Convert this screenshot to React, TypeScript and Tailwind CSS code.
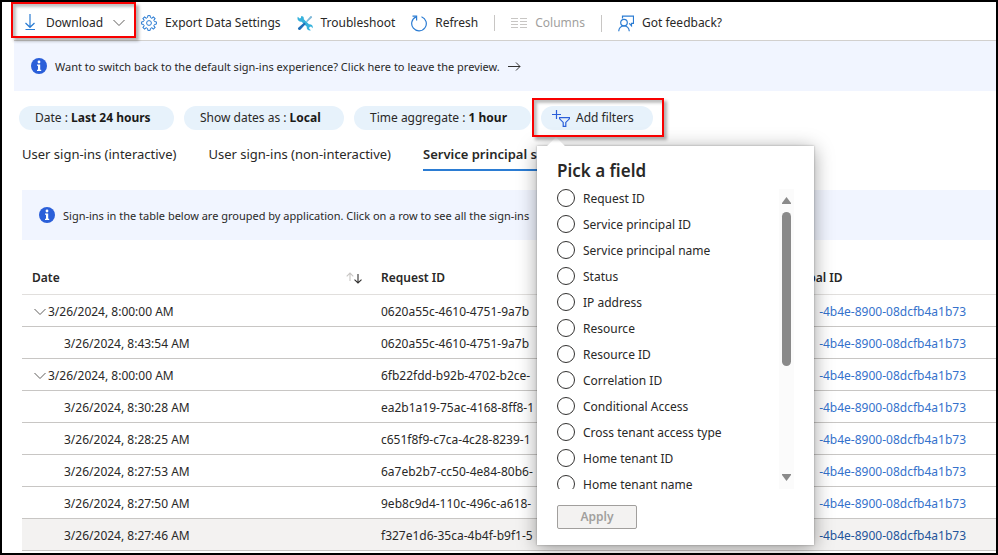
import React from "react";

const fields = [
  "Request ID",
  "Service principal ID",
  "Service principal name",
  "Status",
  "IP address",
  "Resource",
  "Resource ID",
  "Correlation ID",
  "Conditional Access",
  "Cross tenant access type",
  "Home tenant ID",
  "Home tenant name",
];

type Row = { date: string; request: string; parent?: boolean; active?: boolean };

const rows: Row[] = [
  { date: "3/26/2024, 8:00:00 AM", request: "0620a55c-4610-4751-9a7b", parent: true },
  { date: "3/26/2024, 8:43:54 AM", request: "0620a55c-4610-4751-9a7b" },
  { date: "3/26/2024, 8:00:00 AM", request: "6fb22fdd-b92b-4702-b2ce-", parent: true },
  { date: "3/26/2024, 8:30:28 AM", request: "ea2b1a19-75ac-4168-8ff8-1" },
  { date: "3/26/2024, 8:28:25 AM", request: "c651f8f9-c7ca-4c28-8239-1" },
  { date: "3/26/2024, 8:27:53 AM", request: "6a7eb2b7-cc50-4e84-80b6-" },
  { date: "3/26/2024, 8:27:50 AM", request: "9eb8c9d4-110c-496c-a618-" },
  { date: "3/26/2024, 8:27:46 AM", request: "f327e1d6-35ca-4b4f-b9f1-5", active: true },
];

function DownloadIcon() {
  return (
    <svg width="14" height="18" viewBox="0 0 14 18" fill="none" stroke="#2b7cd3" strokeWidth="1.2">
      <path d="M8 0v13M3.500 9 8 13.300 12.500 9M3.500 15.500h9.500" />
    </svg>
  );
}

function Chevron() {
  return (
    <svg width="12" height="8" viewBox="0 0 12 8" fill="none" stroke="#605e5c" strokeWidth="1">
      <path d="M.5 1 6 6.5 11.500 1" />
    </svg>
  );
}

function GearIcon() {
  const teeth = [0, 45, 90, 135, 180, 225, 270, 315];
  return (
    <svg width="16" height="16" viewBox="-8 -8 16 16" fill="none" stroke="#2b7cd3" strokeWidth="1">
      {teeth.map((a) => (
        <path
          key={a}
          transform={`rotate(${a})`}
          d="M-2.100 -5.100 L-1.400 -5.500 L-1.200 -7.400 H1.200 L1.400 -5.500 L2.100 -5.100"
        />
      ))}
      <circle r="2.400" />
    </svg>
  );
}

function ToolsIcon() {
  return (
    <svg width="16" height="16" viewBox="0 0 16 16" fill="none">
      <path d="M14.800 1.200 13.600.9 9 6.200l1 1 5.100-4.700z" fill="#7fb8d8" />
      <path
        d="M4.300.9 3.800 3 2.700 3.400.8 1.800C.2 3.200.5 4.800 1.600 5.800c.8.8 1.900 1.100 3 .9l5.200 5.100c-.2 1.200.1 2.200.9 2.900.9.8 2 1 3.100.6l-1.700-1.700.4-1.600 1.600-.4 1.500 1.600c.4-1.100.1-2.300-.7-3.100-.8-.8-1.900-1.100-2.900-.9L6.800 4.300c.2-1-.1-2-.8-2.700A3.400 3.400 0 0 0 4.300.9z"
        fill="#36b2dc"
      />
      <path d="M7.200 7.500 8.800 9 3.600 14.400c-.6.7-1.600.8-2.200.2s-.6-1.600.1-2.200z" fill="#1f6fb8" />
    </svg>
  );
}

function RefreshIcon() {
  return (
    <svg width="16" height="17" viewBox="0 0 16 17" fill="none" stroke="#2b7cd3" strokeWidth="1.200">
      <path d="M10.500 1.700A7.300 7.300 0 1 1 5 1.900" />
      <path d="M1.500 1.200H5.600V5.400" />
    </svg>
  );
}

function ColumnsIcon() {
  return (
    <svg width="16" height="12" viewBox="0 0 16 12" stroke="#c8c6c4" strokeWidth="1">
      <path d="M0 1.500h7M9 1.500h7M0 4.500h7M9 4.500h7M0 7.500h7M9 7.500h7M0 10.500h7M9 10.500h7" />
    </svg>
  );
}

function FeedbackIcon() {
  return (
    <svg width="16" height="17" viewBox="0 0 16 17" fill="none" stroke="#2b7cd3" strokeWidth="1.200">
      <path d="M4.500 3.500V1.100h11v7.300h-2v2.400l-2.300-2.400" />
      <circle cx="6" cy="7.600" r="3.300" />
      <path d="M.7 16.200c.3-3 2.500-5.200 5.300-5.200s5 2.200 5.300 5.200" />
    </svg>
  );
}

function InfoIcon() {
  return (
    <svg className="shrink-0" width="16" height="16" viewBox="0 0 16 16">
      <circle cx="8" cy="8" r="8" fill="#2b5fd9" />
      <circle cx="8" cy="4" r="1.400" fill="#fff" />
      <path d="M6 6.500h3.200v5.300h1v1.200H6v-1.200h1V7.700H6z" fill="#fff" />
    </svg>
  );
}

function AddFilterIcon() {
  return (
    <svg width="18" height="17" viewBox="0 0 18 17" fill="none" stroke="#2b5fd9" strokeWidth="1.200">
      <path d="M4.500 0v9M0 4.500h9" />
      <path d="M7.600 7.600h9.800v1.200l-3.600 3.600v3.900h-2.600v-3.900L7.600 8.800z" />
    </svg>
  );
}

function ArrowRight() {
  return (
    <svg width="13" height="9" viewBox="0 0 13 9" fill="none" stroke="#323130" strokeWidth="1">
      <path d="M0 4.500h12M8 .5l4 4-4 4" />
    </svg>
  );
}

function SortIcon() {
  return (
    <svg width="17" height="12" viewBox="0 0 17 12" fill="none" strokeWidth="1.100">
      <path d="M4 9V1M.7 4.300 4 1l3.300 3.300" stroke="#c8c6c4" />
      <path d="M12 2v9M8.500 7.600 12 11l3.500-3.400" stroke="#323130" />
    </svg>
  );
}

function Highlight({ className }: { className: string }) {
  return (
    <span
      className={`pointer-events-none absolute z-30 border-2 border-[#f80000] shadow-[3px_3px_3px_rgba(0,0,0,0.3),inset_3px_3px_3px_rgba(0,0,0,0.25)] ${className}`}
    />
  );
}

function Pill({ label, value, className }: { label: string; value: string; className: string }) {
  return (
    <button className={`h-6 rounded-full bg-[#e7f2fb] px-4 text-left whitespace-nowrap ${className}`}>
      {label} : <b className="font-bold text-[#1b1a19]">{value}</b>
    </button>
  );
}

function FieldPicker() {
  return (
    <div
      role="dialog"
      aria-label="Pick a field"
      className="absolute top-10 -left-1 z-20 w-[277px] bg-white px-5 pt-[13px] pb-4 shadow-[0_3px_18px_rgba(0,0,0,0.38),0_0_2px_rgba(0,0,0,0.3)]"
    >
      <div className="absolute -top-1.5 left-3 size-3.5 rotate-45 bg-white" />
      <h2 className="relative mb-1.5 text-[17px] leading-6 font-semibold">Pick a field</h2>
      <div className="flex h-[300px] justify-between overflow-hidden">
        <div className="flex flex-col gap-2">
          {fields.map((f) => (
            <label key={f} className="flex h-[18px] shrink-0 items-center gap-2">
              <input
                type="radio"
                name="field"
                className="size-[18px] appearance-none rounded-full border border-[#323130] bg-white"
              />
              <span className="pt-px">{f}</span>
            </label>
          ))}
        </div>
        <div className="flex w-[15px] flex-col items-center bg-[#fbfbfb] pt-2 pb-2">
          <svg width="9" height="7" viewBox="0 0 9 7" fill="#8a8a8a">
            <path d="M4.500 0 9 6v1H0V6z" />
          </svg>
          <div className="mt-2 h-[154px] w-[9px] rounded-full bg-[#8a8a8a]" />
          <svg className="mt-auto" width="9" height="7" viewBox="0 0 9 7" fill="#8a8a8a">
            <path d="M4.500 7 0 1V0h9v1z" />
          </svg>
        </div>
      </div>
      <button
        disabled
        className="mt-4 block h-6 w-20 rounded-[2px] border border-[#a19f9d] bg-[#f3f2f1] font-semibold text-[#a19f9d]"
      >
        Apply
      </button>
    </div>
  );
}

export default function App() {
  return (
    <main className="min-h-screen overflow-hidden border-2 border-black bg-white font-['Noto_Sans','Open_Sans',sans-serif] text-[12px] leading-4 text-[#292827]">
      <div className="ml-3 flex h-[39px] items-center border-b border-[#d2d0ce] pl-2 whitespace-nowrap">
        <button className="relative flex items-center gap-2.5 pt-1">
          <DownloadIcon />
          <span>Download</span>
          <Chevron />
          <Highlight className="-inset-x-[11px] -top-2 h-9" />
        </button>
        <button className="ml-4 flex items-center gap-2 pt-1">
          <GearIcon />
          Export Data Settings
        </button>
        <button className="ml-4 flex items-center gap-2 pt-1">
          <ToolsIcon />
          Troubleshoot
        </button>
        <button className="ml-4 flex items-center gap-2 pt-1">
          <RefreshIcon />
          Refresh
        </button>
        <button disabled className="mt-1 ml-4 flex items-center gap-2 border-l border-[#c8c6c4] pl-4 text-[#a19f9e]">
          <ColumnsIcon />
          Columns
        </button>
        <button className="mt-1 ml-4 flex items-center gap-2 border-l border-[#c8c6c4] pl-4">
          <FeedbackIcon />
          Got feedback?
        </button>
      </div>

      <a href="#leave" className="ml-3 flex h-[50px] items-center gap-2 bg-[#f1f5ff] pl-[17px] text-[11px]">
        <InfoIcon />
        <span className="pt-0.5">
          Want to switch back to the default sign-ins experience? Click here to leave the preview.
        </span>
        <ArrowRight />
      </a>

      <div className="mt-[15px] ml-[17px] flex gap-2.5">
        <Pill label="Date" value="Last 24 hours" className="w-[155px]" />
        <Pill label="Show dates as" value="Local" className="w-40" />
        <Pill label="Time aggregate" value="1 hour" className="w-[177px]" />
        <div className="relative">
          <button className="flex h-6 w-28 items-center gap-1.5 rounded-full bg-[#e7f2fb] pl-[11px] whitespace-nowrap">
            <AddFilterIcon />
            Add filters
          </button>
          <Highlight className="-top-2 -right-[11px] -left-[9px] h-[39px]" />
          <FieldPicker />
        </div>
      </div>

      <nav className="mt-[9px] ml-5 flex gap-8 text-[13px]">
        <button className="h-8 border-b-2 border-transparent">User sign-ins (interactive)</button>
        <button className="h-8 border-b-2 border-transparent">User sign-ins (non-interactive)</button>
        <button className="h-8 border-b-2 border-[#2b7cd3] font-semibold">Service principal sign-ins</button>
      </nav>

      <div className="mt-[19px] ml-5 flex h-[50px] items-center gap-2 bg-[#f1f5ff] pl-[17px] text-[11px]">
        <InfoIcon />
        <span className="pt-0.5">
          Sign-ins in the table below are grouped by application. Click on a row to see all the sign-ins
        </span>
      </div>

      <div className="mt-5 ml-5">
        <table className="w-full table-fixed border-separate border-spacing-0 text-left whitespace-nowrap">
          <thead>
            <tr>
              <th className="h-[35px] w-[349px] border-b border-[#e1dfdd] pt-0.5 pr-2 pb-0 pl-2.5 font-semibold">
                <span className="flex items-center justify-between">
                  Date
                  <SortIcon />
                </span>
              </th>
              <th className="w-[347px] border-b border-[#e1dfdd] px-2.5 pt-0.5 pb-0 font-semibold">Request ID</th>
              <th className="border-b border-[#e1dfdd] px-3 pt-0.5 pb-0 font-semibold">Service principal ID</th>
            </tr>
          </thead>
          <tbody>
            {rows.map((r, i) => (
              <tr key={i} className={r.active ? "bg-[#f3f2f1]" : ""}>
                <td className="h-8 border-b border-[#c8c6c4] p-0 pt-0.5">
                  {r.parent ? (
                    <button className="flex items-center gap-0.5 pl-3">
                      <Chevron />
                      {r.date}
                    </button>
                  ) : (
                    <span className="pl-[42px]">{r.date}</span>
                  )}
                </td>
                <td className="border-b border-[#c8c6c4] px-2.5 pt-0.5 pb-0">{r.request}</td>
                <td className="border-b border-[#c8c6c4] pt-0.5 pr-[30px] pb-0 text-right">
                  <a href="#principal" className={r.active ? "text-[#23559b]" : "text-[#3572cc]"}>
                    -4b4e-8900-08dcfb4a1b73
                  </a>
                </td>
              </tr>
            ))}
          </tbody>
        </table>
      </div>
    </main>
  );
}
